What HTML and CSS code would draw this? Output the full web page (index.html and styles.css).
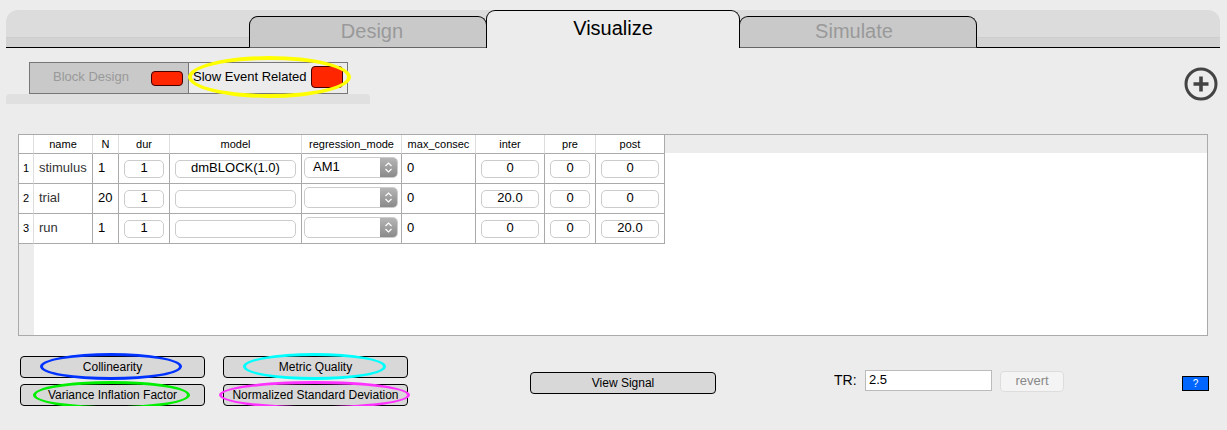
FILE: index.html
```html
<!DOCTYPE html>
<html lang="en">
<head>
  <meta name="viewport" content="width=device-width, initial-scale=1.0">
  <title>Visualize</title>
  <link rel="stylesheet" href="styles.css">
</head>
<body>

  <nav class="tabbar">
    <div class="tab tab-left">Design</div>
    <div class="tab tab-active">Visualize</div>
    <div class="tab tab-right">Simulate</div>
  </nav>

  <div class="toolbar">
    <div class="subpanel">
      <div class="subtabs">
        <div class="subtab subtab-off">
          <span class="subtab-label">Block Design</span>
          <span class="swatch"></span>
        </div>
        <div class="subtab subtab-on">
          <span class="subtab-label">Slow Event Related</span>
          <span class="swatch swatch-big"></span>
          <span class="ring ring-yellow"></span>
        </div>
      </div>
      <div class="substrip"></div>
    </div>
    <svg class="add-icon" width="34" height="34" viewBox="0 0 34 34" aria-label="add">
      <circle cx="17" cy="17" r="15" fill="none" stroke="#444" stroke-width="3"/>
      <path d="M17 9.500v15M9.500 17h15" fill="none" stroke="#444" stroke-width="3.600"/>
    </svg>
  </div>

  <div class="table-wrap">
    <table class="events">
      <thead>
        <tr>
          <th class="col-row"></th>
          <th class="col-name">name</th>
          <th class="col-n">N</th>
          <th class="col-dur">dur</th>
          <th class="col-model">model</th>
          <th class="col-mode">regression_mode</th>
          <th class="col-max">max_consec</th>
          <th class="col-inter">inter</th>
          <th class="col-pre">pre</th>
          <th class="col-post">post</th>
        </tr>
      </thead>
      <tbody>
        <tr>
          <td class="row-num">1</td>
          <td class="name">stimulus</td>
          <td class="count">1</td>
          <td><input class="field" value="1"></td>
          <td><input class="field" value="dmBLOCK(1.0)"></td>
          <td>
            <div class="select"><span class="select-text">AM1</span><span class="select-arrow"><svg width="9" height="13" viewBox="0 0 9 13"><path d="M1.500 5L4.500 2L7.500 5M1.500 8L4.500 11L7.500 8" fill="none" stroke="#fff" stroke-width="1.200"/></svg></span></div>
          </td>
          <td class="count">0</td>
          <td><input class="field" value="0"></td>
          <td><input class="field" value="0"></td>
          <td><input class="field" value="0"></td>
        </tr>
        <tr>
          <td class="row-num">2</td>
          <td class="name">trial</td>
          <td class="count">20</td>
          <td><input class="field" value="1"></td>
          <td><input class="field" value=""></td>
          <td>
            <div class="select"><span class="select-text"></span><span class="select-arrow"><svg width="9" height="13" viewBox="0 0 9 13"><path d="M1.500 5L4.500 2L7.500 5M1.500 8L4.500 11L7.500 8" fill="none" stroke="#fff" stroke-width="1.200"/></svg></span></div>
          </td>
          <td class="count">0</td>
          <td><input class="field" value="20.0"></td>
          <td><input class="field" value="0"></td>
          <td><input class="field" value="0"></td>
        </tr>
        <tr>
          <td class="row-num">3</td>
          <td class="name">run</td>
          <td class="count">1</td>
          <td><input class="field" value="1"></td>
          <td><input class="field" value=""></td>
          <td>
            <div class="select"><span class="select-text"></span><span class="select-arrow"><svg width="9" height="13" viewBox="0 0 9 13"><path d="M1.500 5L4.500 2L7.500 5M1.500 8L4.500 11L7.500 8" fill="none" stroke="#fff" stroke-width="1.200"/></svg></span></div>
          </td>
          <td class="count">0</td>
          <td><input class="field" value="0"></td>
          <td><input class="field" value="0"></td>
          <td><input class="field" value="20.0"></td>
        </tr>
      </tbody>
    </table>
  </div>

  <div class="footer">
    <div class="metric-grid">
      <button class="btn">Collinearity<span class="ring ring-blue"></span></button>
      <button class="btn">Metric Quality<span class="ring ring-cyan"></span></button>
      <button class="btn">Variance Inflation Factor<span class="ring ring-green"></span></button>
      <button class="btn">Normalized Standard Deviation<span class="ring ring-magenta"></span></button>
    </div>
    <button class="btn btn-signal">View Signal</button>
    <div class="tr-group">
      <label class="tr-label" for="tr">TR:</label>
      <input class="tr-input" id="tr" value="2.5">
      <button class="revert">revert</button>
    </div>
    <button class="help">?</button>
  </div>

</body>
</html>
```

FILE: styles.css
```css
body {
  font-family: "Liberation Sans", Arial, sans-serif;
  margin: 0;
  padding: 0;
  background-color: #ececec;
  color: #000;
}

/* top tabs */
.tabbar {
  display: flex;
  align-items: flex-end;
  height: 37px;
  margin: 10px 7px 0 6px;
  padding-left: 243px;
  border-bottom: 1px solid #000;
  border-radius: 12px 12px 0 0;
  background: linear-gradient(#dcdcdc 27px, #cdcdcd 27px, #cdcdcd 28px, #d3d3d3 28px);
}

.tab {
  box-sizing: border-box;
  width: 238px;
  height: 32px;
  margin-bottom: -1px;
  margin-right: -1px;
  padding-top: 3px;
  border: 1px solid #000;
  border-bottom-color: #666;
  border-radius: 9px 9px 0 0;
  background-color: #c9c9c9;
  color: #999;
  font-size: 20px;
  line-height: 23px;
  text-align: center;
}

.tab-left {
  padding-left: 8px;
}

.tab-right {
  padding-right: 8px;
}

.tab-active {
  position: relative;
  width: 254px;
  height: 38px;
  padding-top: 6px;
  border-bottom: none;
  background-color: #ececec;
  color: #000;
}

/* sub tabs row */
.toolbar {
  display: flex;
  justify-content: space-between;
  align-items: flex-start;
  margin-top: 14px;
  padding: 0 9px 0 6px;
}

.subpanel {
  width: 364px;
}

.subtabs {
  display: flex;
  box-sizing: border-box;
  width: 319px;
  height: 32px;
  margin-left: 23px;
  border: 1px solid #777;
}

.subtab {
  position: relative;
  display: flex;
  align-items: center;
  box-sizing: border-box;
  font-size: 13px;
}

.subtab-label {
  padding-bottom: 3px;
}

.subtab-off {
  width: 159px;
  padding-left: 23px;
  border-right: 1px solid #777;
  background-color: #c9c9c9;
  color: #999;
}

.subtab-on {
  flex: 1;
  padding-left: 4px;
}

.subtab-off .swatch {
  margin-left: 22px;
}

.subtab-on .swatch {
  margin-left: 5px;
}

.swatch {
  box-sizing: border-box;
  width: 32px;
  height: 15px;
  border: 1px solid #400;
  border-radius: 4px;
  background-color: #ff2600;
}

.swatch-big {
  height: 22px;
  margin-top: -2px;
}

.substrip {
  height: 10px;
  border-radius: 4px 4px 0 0;
  background-color: #e0e0e0;
}

.add-icon {
  margin-top: 5px;
}

/* table */
.table-wrap {
  box-sizing: border-box;
  width: 1190px;
  height: 202px;
  margin: 30px 0 0 18px;
  border: 1px solid #aaa;
  background:
    linear-gradient(#ececec, #ececec) top left / 100% 18px no-repeat,
    linear-gradient(#ececec, #ececec) top left / 15px 100% no-repeat,
    #fff;
}

.events {
  table-layout: fixed;
  width: 646px;
  border-collapse: separate;
  border-spacing: 0;
}

.events th {
  box-sizing: border-box;
  height: 19px;
  padding: 0;
  border-right: 1px solid #ddd;
  border-bottom: 1px solid #aaa;
  background-color: #fff;
  font-size: 11px;
  font-weight: normal;
  text-align: center;
}

.events td {
  box-sizing: border-box;
  height: 30px;
  padding: 0;
  border-right: 1px solid #aaa;
  border-bottom: 1px solid #aaa;
  background-color: #fff;
  font-size: 13px;
}

.events th:last-child,
.events td:last-child {
  border-right-color: #aaa;
}

.col-row { width: 15px; }
.col-name { width: 59px; }
.col-n { width: 26px; }
.col-dur { width: 51px; }
.col-model { width: 132px; }
.col-mode { width: 100px; }
.col-max { width: 74px; }
.col-inter { width: 69px; }
.col-pre { width: 51px; }
.col-post { width: 69px; }

.events .row-num {
  padding-bottom: 2px;
  border-right-color: #ddd;
  font-size: 11px;
  text-align: center;
}

.events .name {
  padding: 0 0 2px 5px;
  color: #333;
}

.events .count {
  padding: 0 0 2px 5px;
}

.field {
  display: block;
  box-sizing: border-box;
  width: calc(100% - 10px);
  height: 18px;
  margin: 0 5px;
  padding: 0 0 3px;
  border: 1px solid #ccc;
  border-radius: 5px;
  background-color: #fff;
  font-family: inherit;
  font-size: 13px;
  text-align: center;
}

.select {
  display: flex;
  box-sizing: border-box;
  width: 94px;
  height: 21px;
  margin: 0 0 2px 2px;
  border: 1px solid #ccc;
  border-radius: 5px;
  background-color: #fff;
  overflow: hidden;
}

.select-text {
  flex: 1;
  padding-left: 8px;
  line-height: 17px;
}

.select-arrow {
  display: flex;
  align-items: center;
  justify-content: center;
  width: 17px;
  background: linear-gradient(#b5b5b5, #8a8a8a);
}

/* bottom row */
.footer {
  display: flex;
  align-items: flex-start;
  margin-top: 20px;
  padding-left: 20px;
}

.metric-grid {
  display: grid;
  grid-template-columns: 185px 185px;
  grid-auto-rows: 22px;
  column-gap: 18px;
  row-gap: 6px;
}

.btn {
  position: relative;
  padding: 0;
  border: 1px solid #000;
  border-radius: 4px;
  background-color: #d8d8d8;
  color: #000;
  font-family: inherit;
  font-size: 12px;
}

.btn-signal {
  width: 186px;
  height: 22px;
  margin: 16px 0 0 122px;
}

.tr-group {
  display: flex;
  align-items: flex-start;
  margin: 14px 0 0 118px;
}

.tr-label {
  width: 31px;
  font-size: 14px;
  line-height: 20px;
}

.tr-input {
  box-sizing: border-box;
  width: 127px;
  height: 21px;
  padding: 0 0 2px 3px;
  border: 1px solid #bbb;
  background-color: #fff;
  font-family: inherit;
  font-size: 13px;
}

.revert {
  box-sizing: border-box;
  width: 64px;
  height: 21px;
  margin: 1px 0 0 8px;
  padding: 0 0 2px;
  border: 1px solid #ddd;
  border-radius: 4px;
  background-color: #f4f4f4;
  color: #888;
  font-family: inherit;
  font-size: 13px;
}

.help {
  box-sizing: border-box;
  width: 27px;
  height: 15px;
  margin: 20px 0 0 118px;
  padding: 0;
  border: 1px solid #000;
  background-color: #0066ff;
  color: #fff;
  font-family: inherit;
  font-size: 10px;
  line-height: 12px;
}

/* hand drawn annotation rings */
.ring {
  position: absolute;
  box-sizing: border-box;
  border: 3px solid;
  border-radius: 50%;
  pointer-events: none;
}

.ring-yellow {
  left: -1px;
  top: -7px;
  width: 163px;
  height: 42px;
  border-width: 4px;
  border-color: #ffff00;
}

.ring-blue {
  left: 19px;
  top: -4px;
  width: 142px;
  height: 27px;
  border-color: #0033ff;
}

.ring-cyan {
  left: 19px;
  top: -4px;
  width: 143px;
  height: 27px;
  border-color: #00ffff;
}

.ring-green {
  left: 12px;
  top: -4px;
  width: 157px;
  height: 28px;
  border-color: #00ee00;
}

.ring-magenta {
  left: -5px;
  top: -4px;
  width: 191px;
  height: 28px;
  border-color: #ff33ff;
}
```
